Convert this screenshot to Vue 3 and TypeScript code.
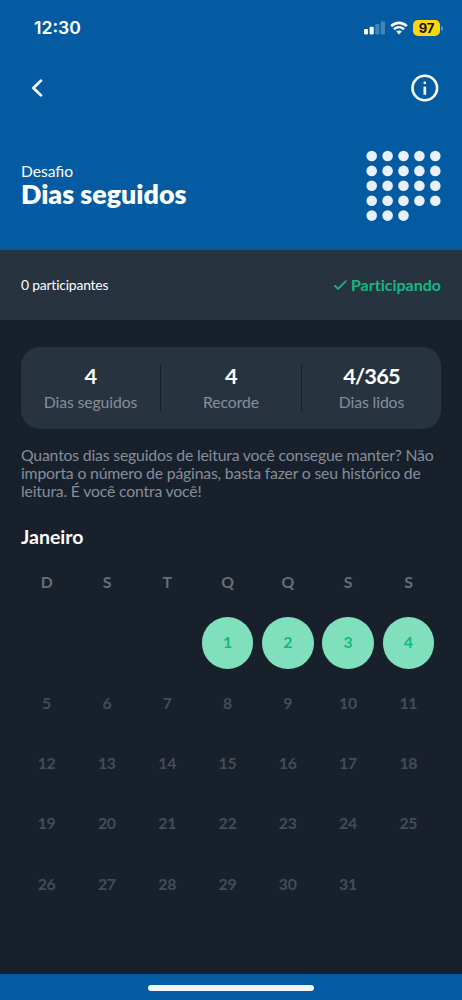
<script setup lang="ts">
interface Stat {
  value: string
  label: string
}

interface Dot {
  x: number
  y: number
}

const stats: Stat[] = [
  { value: '4', label: 'Dias seguidos' },
  { value: '4', label: 'Recorde' },
  { value: '4/365', label: 'Dias lidos' },
]

const weekdays: string[] = ['D', 'S', 'T', 'Q', 'Q', 'S', 'S']
const firstWeekday = 3
const blanks: number[] = Array.from({ length: firstWeekday }, (_, i) => i)
const days: number[] = Array.from({ length: 31 }, (_, i) => i + 1)
const daysRead = 4

const dots: Dot[] = Array.from({ length: 23 }, (_, i) => ({
  x: 5.7 + (i % 5) * 15.9,
  y: 6 + Math.floor(i / 5) * 14.9,
}))
</script>

<template>
  <div class="screen">
    <header class="header">
      <div class="status">
        <span class="time">12:30</span>
        <div class="indicators">
          <svg class="signal" width="21" height="14" viewBox="0 0 21 14" fill="#fff">
            <rect x="0" y="8.1" width="4" height="5.3" rx="1.1" />
            <rect x="5.6" y="5.8" width="4.2" height="7.6" rx="1.1" />
            <rect x="11.2" y="3.1" width="4.2" height="10.3" rx="1.1" opacity=".25" />
            <rect x="16.8" y="0.5" width="4.2" height="12.9" rx="1.1" opacity=".25" />
          </svg>
          <svg class="wifi" width="18" height="14" viewBox="0 0 18 14" fill="none" stroke="#fff">
            <path d="M1.2 5.1C5.6.8 12.4.8 16.8 5.1" stroke-width="2.6" />
            <path d="M4 8.3c2.9-2.6 7.1-2.6 10 0" stroke-width="2.5" />
            <path d="M9 13.4 6.2 10.6c1.6-1.4 4-1.4 5.6 0Z" fill="#fff" stroke="none" />
          </svg>
          <div class="battery"><span class="level">97</span><i class="tip"></i></div>
        </div>
      </div>
      <nav class="nav">
        <svg width="12" height="20" viewBox="0 0 12 20" fill="none" stroke="#fff" stroke-width="2.7" stroke-linecap="round" stroke-linejoin="round">
          <path d="M10 2.6 2.4 10l7.6 7.4" />
        </svg>
        <svg width="28" height="28" viewBox="0 0 28 28" fill="none" stroke="#fff">
          <circle cx="13.8" cy="14" r="12.3" stroke-width="2.6" />
          <path d="M13.8 12.6v8.2" stroke-width="2.6" />
          <circle cx="13.8" cy="8.8" r="1.4" fill="#fff" stroke="none" />
        </svg>
      </nav>
      <div class="hero">
        <div class="titles">
          <div class="kicker">Desafio</div>
          <h1 class="title">Dias seguidos</h1>
        </div>
        <svg class="dots" width="75" height="72" viewBox="0 0 75 72" fill="#e9f0fa">
          <circle v-for="(d, i) in dots" :key="i" :cx="d.x" :cy="d.y" r="5.3" />
        </svg>
      </div>
    </header>

    <section class="joined">
      <span class="count">0 participantes</span>
      <span class="state">
        <svg width="14" height="12" viewBox="0 0 14 12" fill="none" stroke="#12b981" stroke-width="1.8" stroke-linecap="round" stroke-linejoin="round">
          <path d="M2 6.8 5.1 9.9 12.9 2.1" />
        </svg>
        <span class="state-text">Participando</span>
      </span>
    </section>

    <main class="content">
      <div class="card">
        <div v-for="s in stats" :key="s.label" class="stat">
          <div class="value">{{ s.value }}</div>
          <div class="label">{{ s.label }}</div>
        </div>
      </div>

      <p class="about">Quantos dias seguidos de leitura você consegue manter? Não<br />importa o número de páginas, basta fazer o seu histórico de<br />leitura. É você contra você!</p>

      <h2 class="month">Janeiro</h2>

      <div class="calendar">
        <div v-for="(w, i) in weekdays" :key="'w' + i" class="cell weekday"><span>{{ w }}</span></div>
        <div v-for="b in blanks" :key="'b' + b" class="cell"></div>
        <div v-for="d in days" :key="d" class="cell">
          <span class="day" :class="{ read: d <= daysRead }">{{ d }}</span>
        </div>
      </div>
    </main>

    <footer class="footer"><i class="home"></i></footer>
  </div>
</template>

<style>
body {
  margin: 0;
  background: #18202b;
}
</style>

<style scoped>
.screen {
  width: 462px;
  height: 1000px;
  box-sizing: border-box;
  display: flex;
  flex-direction: column;
  overflow: hidden;
  background: #18202b;
  font-family: Lato, "Liberation Sans", sans-serif;
  font-variant-ligatures: none;
  color: #fff;
}
.header {
  flex: none;
  height: 250px;
  background: #045ba1;
}
.status {
  height: 56px;
  padding: 0 19px 0 34px;
  display: flex;
  align-items: center;
  justify-content: space-between;
}
.time {
  font: 600 17.6px/20px Inter, sans-serif;
}
.indicators {
  display: flex;
  align-items: center;
}
.wifi {
  margin-left: 5px;
}
.battery {
  margin-left: 5px;
  display: flex;
  align-items: center;
}
.level {
  width: 27px;
  height: 16px;
  border-radius: 5px;
  background: #fed60a;
  color: #101010;
  font: 700 13px/16px Inter, sans-serif;
  text-align: center;
}
.tip {
  width: 2px;
  height: 5px;
  margin-left: 1px;
  border-radius: 0 2px 2px 0;
  background: #5c94b5;
}
.nav {
  height: 63px;
  padding: 0 23px 0 31px;
  display: flex;
  align-items: center;
  justify-content: space-between;
}
.hero {
  display: flex;
  justify-content: space-between;
  align-items: flex-start;
  padding: 31px 21px 0;
}
.titles {
  padding-top: 11px;
}
.kicker {
  font-size: 15.6px;
  line-height: 20px;
  font-variant-ligatures: common-ligatures;
}
.title {
  margin: 0;
  font-size: 26.8px;
  line-height: 26px;
  font-weight: 800;
}
.joined {
  flex: none;
  height: 70px;
  padding: 0 21px;
  display: flex;
  align-items: center;
  justify-content: space-between;
  background: #283340;
}
.count {
  font-size: 13.9px;
  line-height: 18px;
  letter-spacing: -0.2px;
}
.state {
  display: flex;
  align-items: center;
  gap: 3.5px;
  color: #12b981;
  font-size: 16px;
  line-height: 20px;
  font-weight: 700;
}
.state-text {
  margin-top: -1px;
}
.content {
  flex: 1;
  padding: 27px 21px 0;
}
.card {
  height: 82px;
  box-sizing: border-box;
  padding: 18px 0;
  display: grid;
  grid-template-columns: 139px 141px 140px;
  border-radius: 19px;
  background: #283340;
}
.stat {
  height: 46px;
  text-align: center;
}
.stat + .stat {
  border-left: 1px solid #18202b;
}
.value {
  font-size: 21.8px;
  line-height: 22px;
  font-weight: 700;
  letter-spacing: -0.8px;
}
.label {
  margin-top: 5px;
  font-size: 15.8px;
  line-height: 20px;
  letter-spacing: -0.12px;
  color: #858e9b;
}
.about {
  margin: 17px 0 0;
  font-size: 15.8px;
  line-height: 18px;
  letter-spacing: -0.19px;
  color: #858e9b;
  white-space: nowrap;
}
.month {
  margin: 25px 0 0;
  font-size: 19.5px;
  line-height: 24px;
  font-weight: 700;
}
.calendar {
  margin: 3.8px 0 0 -4.6px;
  display: grid;
  grid-template-columns: repeat(7, 60.3px);
  grid-auto-rows: 60.3px;
}
.cell {
  display: flex;
  align-items: center;
  justify-content: center;
  font-size: 15.8px;
  letter-spacing: -0.25px;
  font-weight: 700;
}
.weekday {
  color: #666e79;
  padding-bottom: 2px;
}
.day {
  width: 51.6px;
  height: 51.6px;
  line-height: 50px;
  border-radius: 50%;
  text-align: center;
  color: #444c57;
}
.read {
  background: #80dfbd;
  color: #12b981;
}
.footer {
  flex: none;
  height: 26px;
  background: #045ba1;
  display: flex;
  justify-content: center;
}
.home {
  width: 166px;
  height: 6px;
  margin-top: 11px;
  border-radius: 3px;
  background: #f0f6f3;
}
</style>
